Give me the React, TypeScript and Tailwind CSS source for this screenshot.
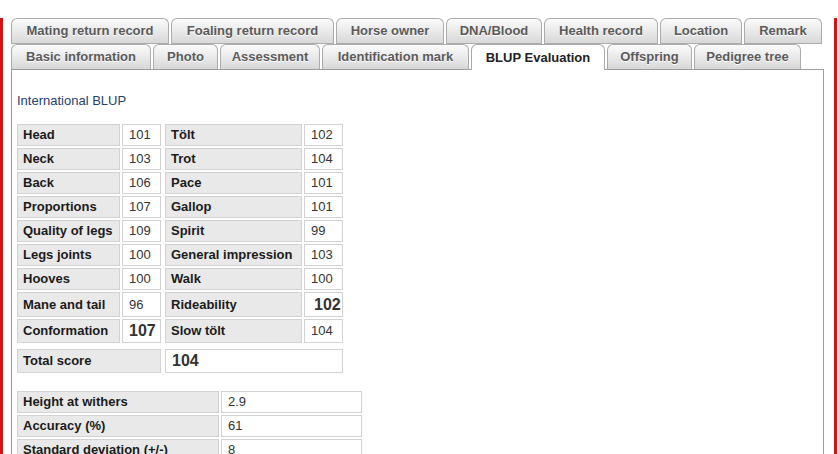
const ROW1 = [
  { label: "Mating return record", w: "w-[158px]" },
  { label: "Foaling return record", w: "w-[163px]" },
  { label: "Horse owner", w: "w-[108px]" },
  { label: "DNA/Blood", w: "w-[96px]" },
  { label: "Health record", w: "w-[114px]" },
  { label: "Location", w: "w-[82px]" },
  { label: "Remark", w: "w-[78px]" },
];

const ROW2 = [
  { label: "Basic information", w: "w-[140px]" },
  { label: "Photo", w: "w-[65px]" },
  { label: "Assessment", w: "w-[100px]" },
  { label: "Identification mark", w: "w-[147px]" },
  { label: "BLUP Evaluation", w: "w-[134px]", active: true },
  { label: "Offspring", w: "w-[85px]" },
  { label: "Pedigree tree", w: "w-[107px]" },
];

const BLUP = [
  { a: "Head", av: "101", b: "Tölt", bv: "102", h: "h-[22px]" },
  { a: "Neck", av: "103", b: "Trot", bv: "104", h: "h-[22px]" },
  { a: "Back", av: "106", b: "Pace", bv: "101", h: "h-[22px]" },
  { a: "Proportions", av: "107", b: "Gallop", bv: "101", h: "h-[22px]" },
  { a: "Quality of legs", av: "109", b: "Spirit", bv: "99", h: "h-[22px]" },
  { a: "Legs joints", av: "100", b: "General impression", bv: "103", h: "h-[22px]" },
  { a: "Hooves", av: "100", b: "Walk", bv: "100", h: "h-[22px]" },
  { a: "Mane and tail", av: "96", b: "Rideability", bv: "102", bBig: true, h: "h-[25px]" },
  { a: "Conformation", av: "107", aBig: true, b: "Slow tölt", bv: "104", h: "h-[24px]" },
];

const STATS = [
  { label: "Height at withers", value: "2.9" },
  { label: "Accuracy (%)", value: "61" },
  { label: "Standard deviation (+/-)", value: "8" },
];

const label = "flex items-center border border-[#d2d2d2] bg-[#e9e9e9] pl-[5px] text-[13px] font-bold text-[#1b1b1b]";
const value = "flex items-center border border-[#d2d2d2] bg-white pl-[6px] text-[13px] text-[#333]";

function Tab({ text, w, active }: { text: string; w: string; active?: boolean }) {
  if (active) {
    return (
      <div className={`${w} flex h-[26px] items-center justify-center rounded-t-[6px] border border-b-0 border-[#a9a9a9] bg-white text-[13px] font-bold text-[#222]`}>
        {text}
      </div>
    );
  }
  return (
    <div className={`${w} flex h-[25px] items-center justify-center rounded-t-[6px] border border-b-0 border-[#acacac] bg-linear-to-b from-[#fbfbfb] to-[#d8d8d8] text-[13px] font-bold text-[#5a5a5a] [text-shadow:0_1px_0_#fff]`}>
      {text}
    </div>
  );
}

export default function App() {
  return (
    <div className="h-[454px] w-[838px] overflow-hidden bg-white font-['Liberation_Sans',Arial,sans-serif]">
      <div className="h-full w-[837px] border-x-[3px] border-[#d01414] bg-white pl-[8px] pr-[10px]">
        {/* Tabs */}
        <div className="mt-[18px] flex gap-[2px]">
          {ROW1.map((t) => (
            <div key={t.label} className="border-b border-[#acacac]">
              <Tab text={t.label} w={t.w} />
            </div>
          ))}
        </div>
        <div className="relative z-10 flex h-[25px] items-start gap-[2px]">
          {ROW2.map((t) => (
            <Tab key={t.label} text={t.label} w={t.w} active={t.active} />
          ))}
        </div>

        {/* Panel */}
        <div className="h-[400px] border border-[#9c9c9c] bg-white pl-[5px] pt-[23px]">
          <p className="text-[13px] leading-[15px] text-[#24416f]">International BLUP</p>

          <div className="mt-[16px] flex flex-col gap-[2px]">
            {BLUP.map((r) => (
              <div key={r.a} className={`flex ${r.h}`}>
                <div className={`${label} w-[103px]`}>{r.a}</div>
                <div className={`${value} ml-[2px] w-[39px] ${r.aBig ? "pl-[6px] text-[16px] font-bold text-[#111]" : ""}`}>{r.av}</div>
                <div className={`${label} ml-[4px] w-[137px]`}>{r.b}</div>
                <div className={`${value} ml-[2px] w-[39px] ${r.bBig ? "pl-[9px] text-[16px] font-bold text-[#111]" : ""}`}>{r.bv}</div>
              </div>
            ))}
            <div className="mt-[4px] flex h-[24px]">
              <div className={`${label} w-[144px]`}>Total score</div>
              <div className={`${value} ml-[4px] w-[178px] text-[16px] font-bold text-[#111]`}>104</div>
            </div>
          </div>

          <div className="mt-[18px] flex flex-col gap-[2px]">
            {STATS.map((s) => (
              <div key={s.label} className="flex h-[22px]">
                <div className={`${label} w-[202px]`}>{s.label}</div>
                <div className={`${value} ml-[2px] w-[141px]`}>{s.value}</div>
              </div>
            ))}
          </div>
        </div>
      </div>
    </div>
  );
}
